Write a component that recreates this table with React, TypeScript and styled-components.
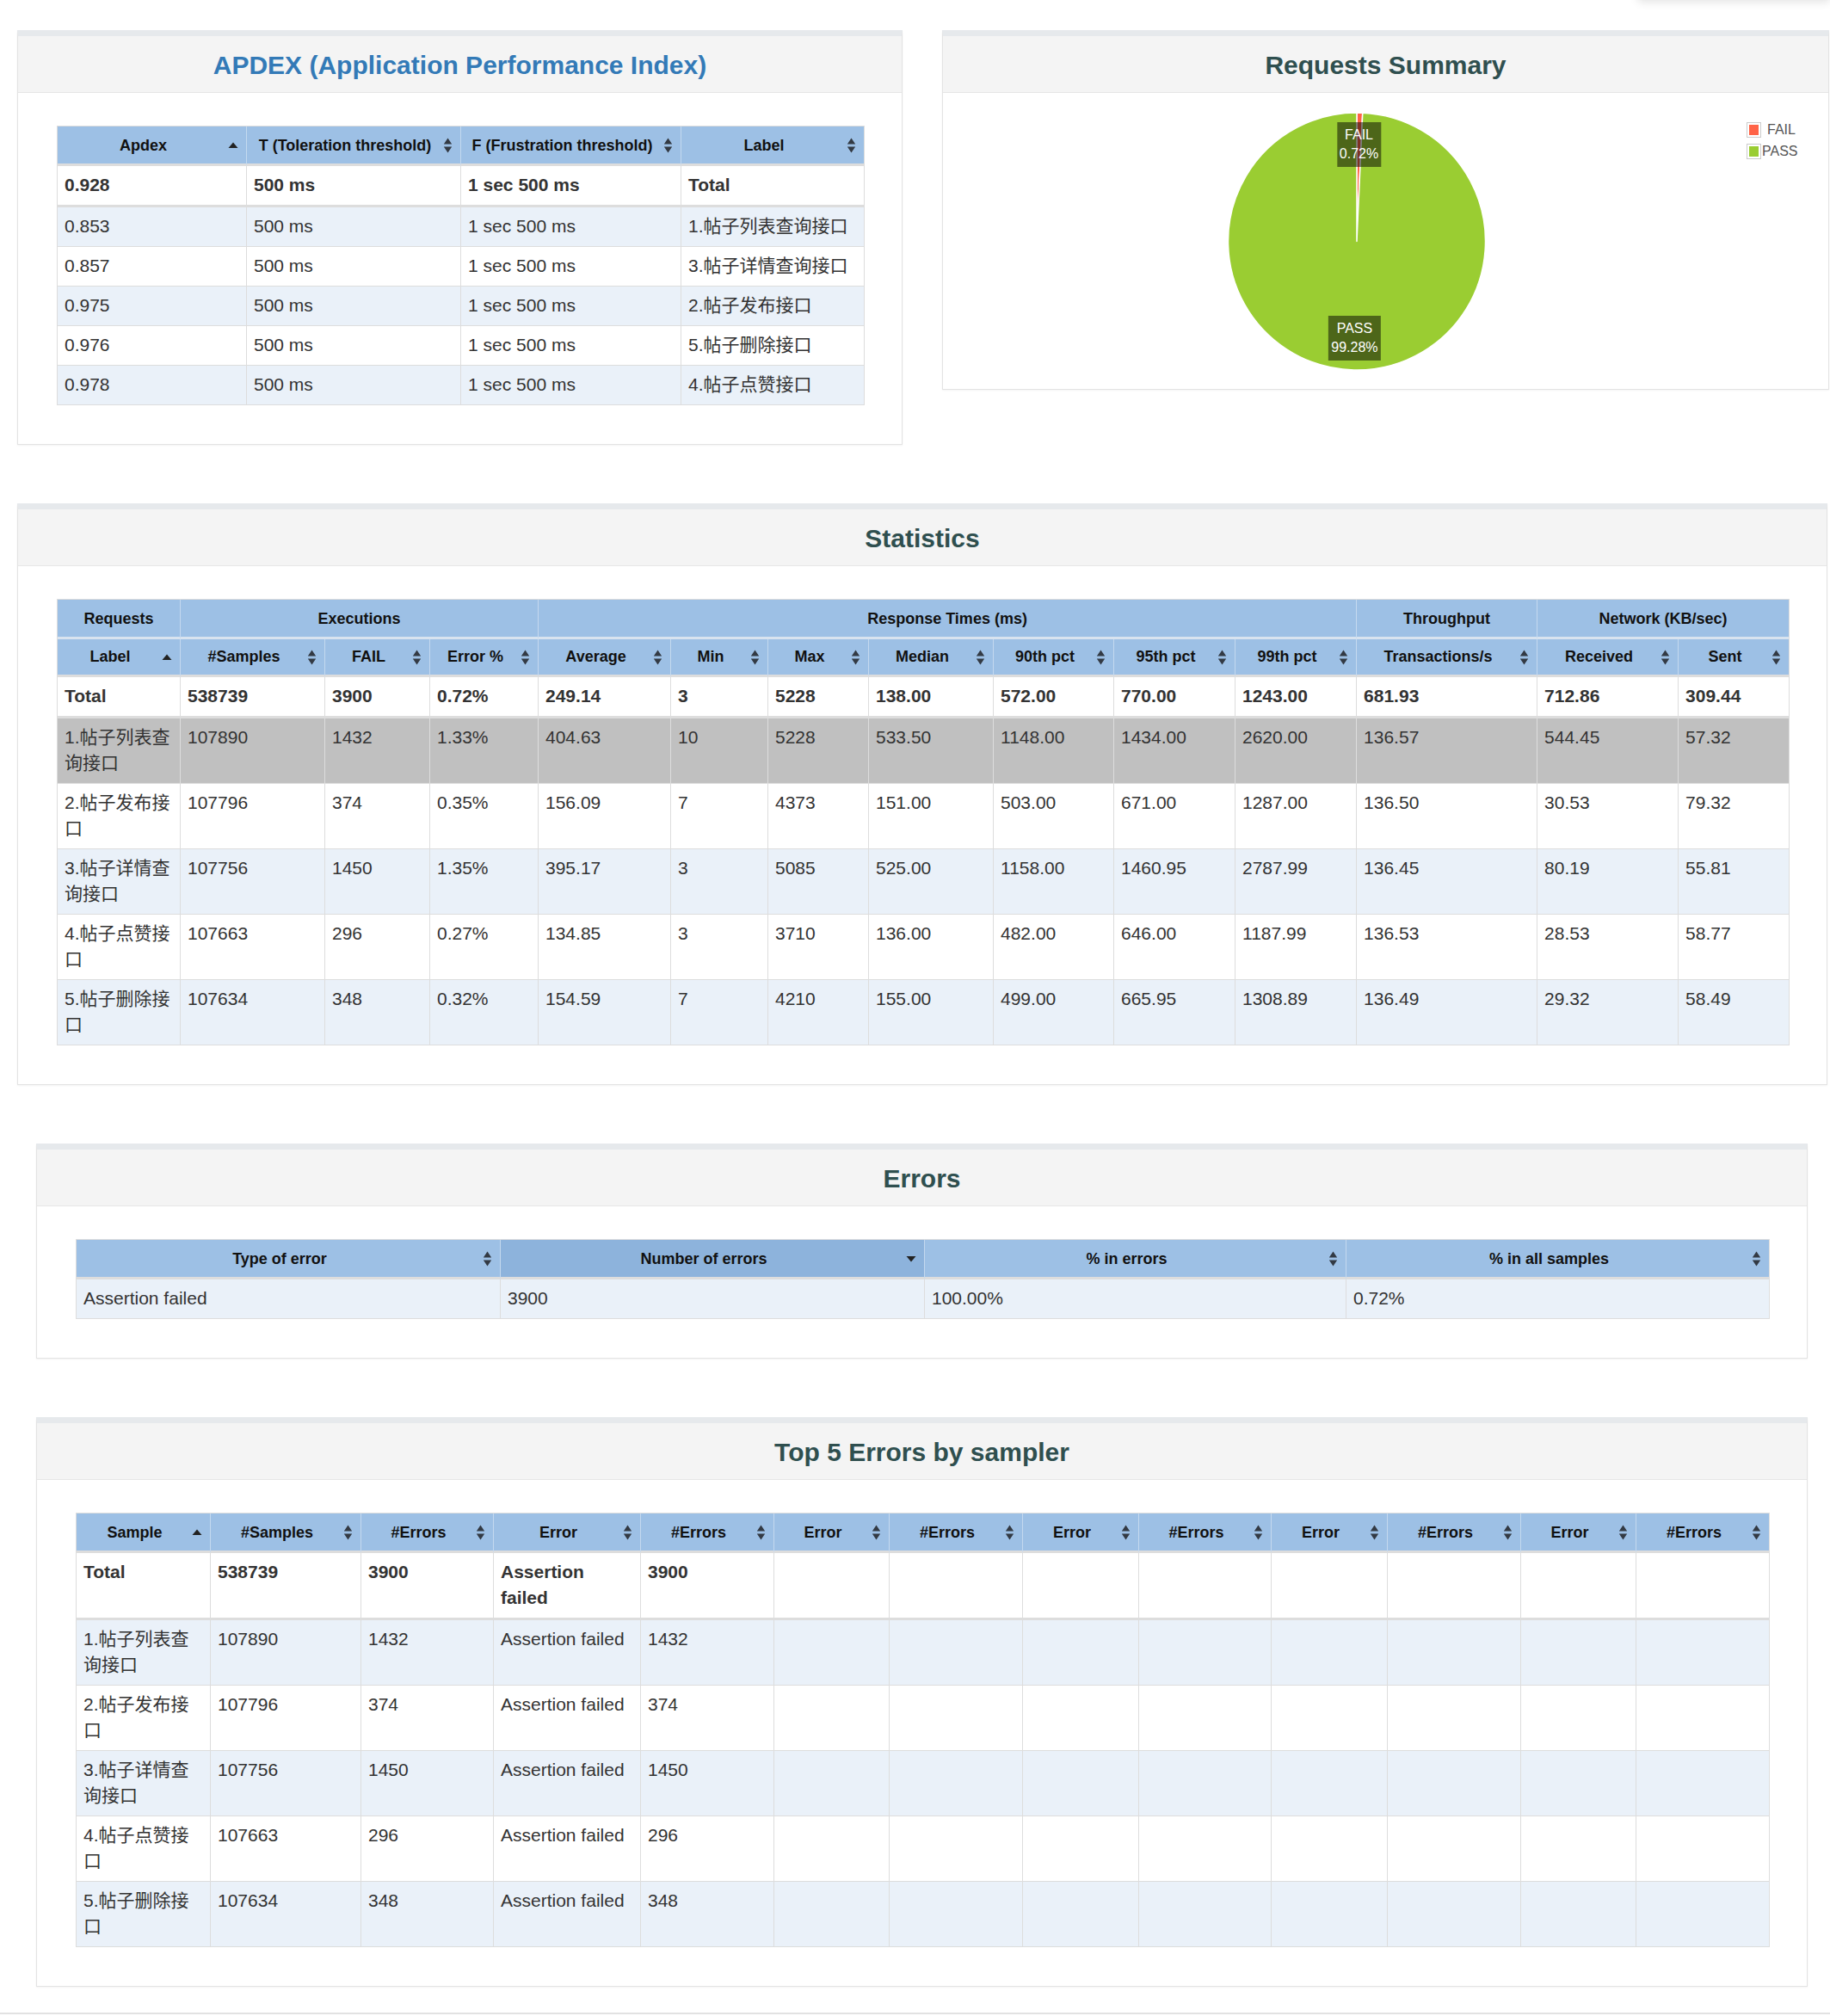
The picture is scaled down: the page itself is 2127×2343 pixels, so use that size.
import React from 'react';
import styled, { createGlobalStyle } from 'styled-components';

const GlobalStyle = createGlobalStyle`
  * { box-sizing: border-box; }
  html, body {
    margin: 0;
    padding: 0;
    background: #ffffff;
    overflow: hidden;
  }
  body {
    font-family: "Liberation Sans", Arial, "Noto Sans CJK SC", sans-serif;
    font-size: 21px;
    color: #333333;
  }
`;

const Page = styled.div`
  position: relative;
  width: 2127px;
  height: 2343px;
  overflow: hidden;
`;

const TopShadow = styled.div`
  position: absolute;
  top: -40px;
  right: 0;
  width: 223px;
  height: 40px;
  background: #ffffff;
  box-shadow: 0 2px 10px rgba(0, 0, 0, 0.12);
`;

const Content = styled.main`
  display: flex;
  flex-direction: column;
  gap: 68px;
  padding: 35px 0 0 20px;
`;

const TopRow = styled.div`
  display: flex;
  align-items: flex-start;
  gap: 46px;
`;

const Panel = styled.section<{ $width: number; $inset?: number }>`
  width: ${p => p.$width}px;
  margin-left: ${p => p.$inset ?? 0}px;
  background: #ffffff;
  border: 1px solid #e3e3e3;
  border-top: 7px solid #e6e9ec;
  box-shadow: 0 1px 2px rgba(0, 0, 0, 0.05);
`;

const PanelHeading = styled.header`
  height: 66px;
  padding-top: 2px;
  display: flex;
  align-items: center;
  justify-content: center;
  background: #f4f4f4;
  border-bottom: 1px solid #e6e6e6;
`;

const Title = styled.h3<{ $color?: string }>`
  margin: 0;
  font-size: 30px;
  line-height: 33px;
  font-weight: 700;
  color: ${p => p.$color ?? '#2f4f4f'};
`;

const PanelBody = styled.div`
  padding: 38px 45px 45px;
`;

const ChartBody = styled.div`
  position: relative;
  height: 344px;
`;

const Table = styled.table`
  width: 100%;
  table-layout: fixed;
  border-collapse: separate;
  border-spacing: 0;
  border: 1px solid #dddddd;
  border-bottom: none;
`;

type SortDir = 'asc' | 'desc' | 'both';

const Th = styled.th<{ $sort?: SortDir; $sorted?: boolean; $compact?: boolean; $sep?: string }>`
  position: relative;
  padding: ${p => (p.$compact ? '7px' : '9px')} ${p => (p.$sort ? '28px' : '8px')} 8px 8px;
  line-height: 26px;
  font-size: 18px;
  font-weight: 700;
  color: #111111;
  text-align: center;
  vertical-align: middle;
  white-space: nowrap;
  background: ${p => (p.$sorted ? '#8db3dc' : '#9dc0e5')};
  border-left: 1px solid #c4d9ef;
  border-bottom: 3px solid ${p => p.$sep ?? '#dddddd'};
  &:first-child {
    border-left: none;
  }
`;

type Tone = 'plain' | 'stripe' | 'hover';

const Tr = styled.tr<{ $tone: Tone }>`
  background: ${p => (p.$tone === 'hover' ? '#c0c0c0' : p.$tone === 'stripe' ? '#eaf1f9' : '#ffffff')};
`;

const Td = styled.td<{ $bold?: boolean; $thick?: boolean }>`
  padding: 7px 8px 8px;
  line-height: 30px;
  font-size: 21px;
  font-weight: ${p => (p.$bold ? 700 : 400)};
  color: #333333;
  text-align: left;
  vertical-align: top;
  overflow-wrap: break-word;
  border-left: 1px solid #dddddd;
  border-bottom: ${p => (p.$thick ? '3px' : '1px')} solid #dddddd;
  &:first-child {
    border-left: none;
  }
`;

const SortMark = styled.svg`
  position: absolute;
  right: 9px;
  top: 50%;
  transform: translateY(-50%);
`;

const SortIcon = ({ dir }: { dir: SortDir }) => {
  if (dir === 'asc') {
    return (
      <SortMark width="12" height="14" viewBox="0 0 12 14">
        <path d="M0.5 10 L6 3.5 L11.5 10 Z" fill="#222222" />
      </SortMark>
    );
  }
  if (dir === 'desc') {
    return (
      <SortMark width="12" height="14" viewBox="0 0 12 14">
        <path d="M0.5 4 L6 10.5 L11.5 4 Z" fill="#222222" />
      </SortMark>
    );
  }
  return (
    <SortMark width="11" height="19" viewBox="0 0 11 19">
      <path d="M0.8 8 L5.5 1 L10.2 8 Z M0.8 11 L5.5 18 L10.2 11 Z" fill="#333a44" />
    </SortMark>
  );
};

type Head = { label: string; sort?: SortDir; sorted?: boolean };

const HeaderRow = ({ heads, compact }: { heads: Head[]; compact?: boolean }) => (
  <tr>
    {heads.map((h, i) => (
      <Th key={i} $sort={h.sort} $sorted={h.sorted} $compact={compact}>
        {h.label}
        {h.sort && <SortIcon dir={h.sort} />}
      </Th>
    ))}
  </tr>
);

const Cols = ({ widths }: { widths: number[] }) => (
  <colgroup>
    {widths.map((w, i) => (
      <col key={i} style={{ width: w }} />
    ))}
  </colgroup>
);

const TotalRow = ({ cells }: { cells: string[] }) => (
  <Tr $tone="plain">
    {cells.map((c, i) => (
      <Td key={i} $bold $thick>
        {c}
      </Td>
    ))}
  </Tr>
);

const BodyRows = ({ rows, hoverIndex }: { rows: string[][]; hoverIndex?: number }) => (
  <tbody>
    {rows.map((r, i) => (
      <Tr key={i} $tone={i === hoverIndex ? 'hover' : i % 2 === 0 ? 'stripe' : 'plain'}>
        {r.map((c, j) => (
          <Td key={j}>{c}</Td>
        ))}
      </Tr>
    ))}
  </tbody>
);

/* ---------- pie chart ---------- */

const CX = 481;
const CY = 172.5;
const R = 149.5;

const PieLabel = styled.div`
  position: absolute;
  transform: translate(-50%, -50%);
  padding: 4px 3px;
  background: rgba(0, 0, 0, 0.5);
  color: #ffffff;
  font-size: 16px;
  line-height: 22px;
  text-align: center;
  white-space: nowrap;
`;

const Legend = styled.div`
  position: absolute;
  left: 934px;
  top: 30px;
  display: flex;
  flex-direction: column;
`;

const LegendRow = styled.div`
  display: flex;
  align-items: center;
  height: 25px;
`;

const Swatch = styled.span<{ $color: string }>`
  width: 17px;
  height: 18px;
  padding: 2px;
  border: 1px solid #cccccc;
  background: ${p => p.$color};
  background-clip: content-box;
`;

const LegendText = styled.span<{ $gap: number }>`
  margin-left: ${p => p.$gap}px;
  font-size: 16px;
  color: #545454;
`;

const slices = [
  { label: 'FAIL', pct: 0.72, color: '#ff6347', gap: 7 },
  { label: 'PASS', pct: 99.28, color: '#9acd32', gap: 1 },
];

const pt = (deg: number, r: number) => {
  const a = (deg * Math.PI) / 180;
  return [CX + r * Math.cos(a), CY + r * Math.sin(a)];
};

const slicePath = (a0: number, a1: number) => {
  const [x0, y0] = pt(a0, R);
  const [x1, y1] = pt(a1, R);
  const large = a1 - a0 > 180 ? 1 : 0;
  return `M${CX} ${CY} L${x0} ${y0} A${R} ${R} 0 ${large} 1 ${x1} ${y1} Z`;
};

const RequestsPie = () => {
  let start = -90;
  const parts = slices.map(s => {
    const sweep = (s.pct / 100) * 360;
    const a0 = start;
    const a1 = start + sweep;
    start = a1;
    const [lx, ly] = pt((a0 + a1) / 2, R * 0.75);
    return { ...s, d: slicePath(a0, a1), lx, ly };
  });
  return (
    <ChartBody>
      <svg width="1029" height="344" viewBox="0 0 1029 344">
        {parts.map(p => (
          <path key={p.label} d={p.d} fill={p.color} stroke="#ffffff" strokeWidth="1.5" strokeLinejoin="round" />
        ))}
      </svg>
      {parts.map(p => (
        <PieLabel key={p.label} style={{ left: p.lx, top: p.ly }}>
          {p.label}
          <br />
          {p.pct}%
        </PieLabel>
      ))}
      <Legend>
        {slices.map(s => (
          <LegendRow key={s.label}>
            <Swatch $color={s.color} />
            <LegendText $gap={s.gap}>{s.label}</LegendText>
          </LegendRow>
        ))}
      </Legend>
    </ChartBody>
  );
};

/* ---------- data ---------- */

const L1 = '1.帖子列表查询接口';
const L2 = '2.帖子发布接口';
const L3 = '3.帖子详情查询接口';
const L4 = '4.帖子点赞接口';
const L5 = '5.帖子删除接口';

const apdexHeads: Head[] = [
  { label: 'Apdex', sort: 'asc' },
  { label: 'T (Toleration threshold)', sort: 'both' },
  { label: 'F (Frustration threshold)', sort: 'both' },
  { label: 'Label', sort: 'both' },
];

const apdexRows = [
  ['0.853', '500 ms', '1 sec 500 ms', L1],
  ['0.857', '500 ms', '1 sec 500 ms', L3],
  ['0.975', '500 ms', '1 sec 500 ms', L2],
  ['0.976', '500 ms', '1 sec 500 ms', L5],
  ['0.978', '500 ms', '1 sec 500 ms', L4],
];

const statGroups = [
  { label: 'Requests', span: 1 },
  { label: 'Executions', span: 3 },
  { label: 'Response Times (ms)', span: 7 },
  { label: 'Throughput', span: 1 },
  { label: 'Network (KB/sec)', span: 2 },
];

const statHeads: Head[] = [
  { label: 'Label', sort: 'asc' },
  ...['#Samples', 'FAIL', 'Error %', 'Average', 'Min', 'Max', 'Median', '90th pct', '95th pct', '99th pct', 'Transactions/s', 'Received', 'Sent'].map(
    l => ({ label: l, sort: 'both' as SortDir })
  ),
];

const statTotal = ['Total', '538739', '3900', '0.72%', '249.14', '3', '5228', '138.00', '572.00', '770.00', '1243.00', '681.93', '712.86', '309.44'];

const statRows = [
  [L1, '107890', '1432', '1.33%', '404.63', '10', '5228', '533.50', '1148.00', '1434.00', '2620.00', '136.57', '544.45', '57.32'],
  [L2, '107796', '374', '0.35%', '156.09', '7', '4373', '151.00', '503.00', '671.00', '1287.00', '136.50', '30.53', '79.32'],
  [L3, '107756', '1450', '1.35%', '395.17', '3', '5085', '525.00', '1158.00', '1460.95', '2787.99', '136.45', '80.19', '55.81'],
  [L4, '107663', '296', '0.27%', '134.85', '3', '3710', '136.00', '482.00', '646.00', '1187.99', '136.53', '28.53', '58.77'],
  [L5, '107634', '348', '0.32%', '154.59', '7', '4210', '155.00', '499.00', '665.95', '1308.89', '136.49', '29.32', '58.49'],
];

const errorHeads: Head[] = [
  { label: 'Type of error', sort: 'both' },
  { label: 'Number of errors', sort: 'desc', sorted: true },
  { label: '% in errors', sort: 'both' },
  { label: '% in all samples', sort: 'both' },
];

const topHeads: Head[] = [
  { label: 'Sample', sort: 'asc' },
  { label: '#Samples', sort: 'both' },
  { label: '#Errors', sort: 'both' },
  ...Array.from({ length: 5 }).flatMap(() => [
    { label: 'Error', sort: 'both' as SortDir },
    { label: '#Errors', sort: 'both' as SortDir },
  ]),
];

const blanks = (n: number) => Array.from({ length: n }, () => '');

const topTotal = ['Total', '538739', '3900', 'Assertion failed', '3900', ...blanks(8)];

const topRows = [
  [L1, '107890', '1432', 'Assertion failed', '1432', ...blanks(8)],
  [L2, '107796', '374', 'Assertion failed', '374', ...blanks(8)],
  [L3, '107756', '1450', 'Assertion failed', '1450', ...blanks(8)],
  [L4, '107663', '296', 'Assertion failed', '296', ...blanks(8)],
  [L5, '107634', '348', 'Assertion failed', '348', ...blanks(8)],
];

const Footer = styled.footer`
  margin-top: 30px;
  border-top: 2px solid #e2e2e2;
`;

const App = () => (
  <Page>
    <GlobalStyle />
    <TopShadow />
    <Content>
      <TopRow>
        <Panel $width={1029}>
          <PanelHeading>
            <Title $color="#337ab7">APDEX (Application Performance Index)</Title>
          </PanelHeading>
          <PanelBody>
            <Table>
              <Cols widths={[219, 249, 256, 213]} />
              <thead>
                <HeaderRow heads={apdexHeads} />
                <TotalRow cells={['0.928', '500 ms', '1 sec 500 ms', 'Total']} />
              </thead>
              <BodyRows rows={apdexRows} />
            </Table>
          </PanelBody>
        </Panel>
        <Panel $width={1031}>
          <PanelHeading>
            <Title>Requests Summary</Title>
          </PanelHeading>
          <RequestsPie />
        </Panel>
      </TopRow>

      <Panel $width={2104}>
        <PanelHeading>
          <Title>Statistics</Title>
        </PanelHeading>
        <PanelBody>
          <Table>
            <Cols widths={[142, 168, 122, 126, 154, 113, 117, 145, 140, 141, 141, 210, 164, 129]} />
            <thead>
              <tr>
                {statGroups.map(g => (
                  <Th key={g.label} colSpan={g.span} $sep="#d8e3ef">
                    {g.label}
                  </Th>
                ))}
              </tr>
              <HeaderRow heads={statHeads} compact />
              <TotalRow cells={statTotal} />
            </thead>
            <BodyRows rows={statRows} hoverIndex={0} />
          </Table>
        </PanelBody>
      </Panel>

      <Panel $width={2059} $inset={22}>
        <PanelHeading>
          <Title>Errors</Title>
        </PanelHeading>
        <PanelBody>
          <Table>
            <Cols widths={[492, 493, 490, 492]} />
            <thead>
              <HeaderRow heads={errorHeads} />
            </thead>
            <BodyRows rows={[['Assertion failed', '3900', '100.00%', '0.72%']]} />
          </Table>
        </PanelBody>
      </Panel>

      <Panel $width={2059} $inset={22}>
        <PanelHeading>
          <Title>Top 5 Errors by sampler</Title>
        </PanelHeading>
        <PanelBody>
          <Table>
            <Cols widths={[155, 175, 154, 171, 155, 134, 155, 135, 154, 135, 155, 134, 155]} />
            <thead>
              <HeaderRow heads={topHeads} />
              <TotalRow cells={topTotal} />
            </thead>
            <BodyRows rows={topRows} />
          </Table>
        </PanelBody>
      </Panel>
    </Content>
    <Footer />
  </Page>
);

export default App;
